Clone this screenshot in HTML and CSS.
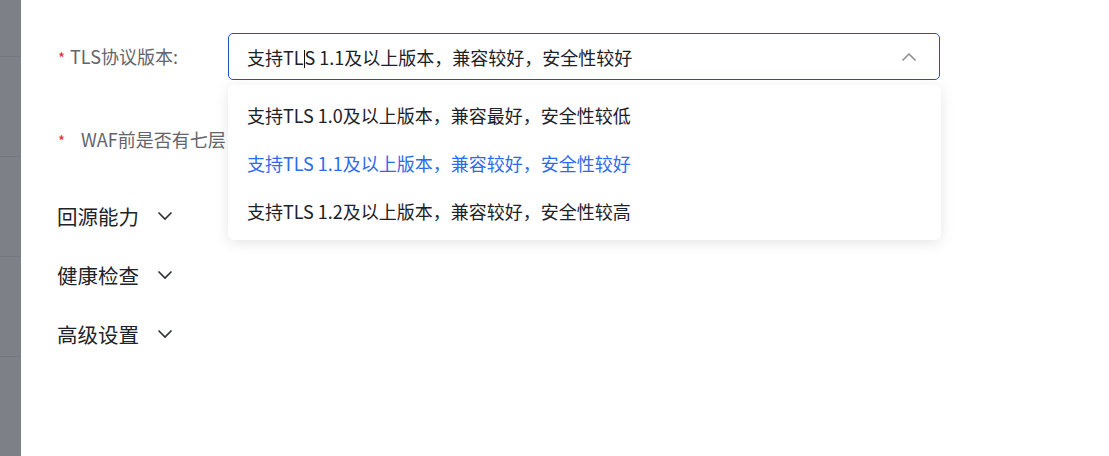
FILE: index.html
```html
<!DOCTYPE html>
<html lang="zh-CN">
<head>
<meta charset="utf-8">
<title>TLS</title>
<link rel="stylesheet" href="styles.css">
</head>
<body>
<div class="page">
  <div class="backdrop">
    <div class="bd-row"></div>
    <div class="bd-row"></div>
    <div class="bd-row"></div>
    <div class="bd-row"></div>
  </div>
  <div class="panel">
    <div class="form-item">
      <div class="label"><span class="req">*</span> TLS协议版本:</div>
      <div class="control">
        <div class="select">
          <span class="value">支持TL<span class="caret"></span>S 1.1及以上版本，兼容较好，安全性较好</span>
          <svg class="arrow" width="16" height="10" viewBox="0 0 16 10"><path d="M1.5 8.5 L8 2 L14.5 8.5" fill="none" stroke="#8c8c8c" stroke-width="1.5"/></svg>
        </div>
        <ul class="menu">
          <li class="opt">支持TLS 1.0及以上版本，兼容最好，安全性较低</li>
          <li class="opt active">支持TLS 1.1及以上版本，兼容较好，安全性较好</li>
          <li class="opt">支持TLS 1.2及以上版本，兼容较好，安全性较高</li>
        </ul>
      </div>
    </div>
    <div class="form-item">
      <div class="label"><span class="req">*</span><span class="gap"></span>WAF前是否有七层</div>
      <div class="control"></div>
    </div>
    <div class="sections">
      <div class="section">回源能力<svg class="chev" width="16" height="10" viewBox="0 0 16 10"><path d="M1.5 1.5 L8 8 L14.5 1.5" fill="none" stroke="#2b2f36" stroke-width="1.6"/></svg></div>
      <div class="section">健康检查<svg class="chev" width="16" height="10" viewBox="0 0 16 10"><path d="M1.5 1.5 L8 8 L14.5 1.5" fill="none" stroke="#2b2f36" stroke-width="1.6"/></svg></div>
      <div class="section">高级设置<svg class="chev" width="16" height="10" viewBox="0 0 16 10"><path d="M1.5 1.5 L8 8 L14.5 1.5" fill="none" stroke="#2b2f36" stroke-width="1.6"/></svg></div>
    </div>
  </div>
</div>
</body>
</html>
```

FILE: styles.css
```css
* { box-sizing: border-box; }
html, body { margin: 0; padding: 0; }
body {
  width: 1109px;
  height: 456px;
  overflow: hidden;
  background: #fff;
  font-family: "Noto Sans CJK SC", "Noto Sans", sans-serif;
}
.page {
  display: flex;
  height: 456px;
}
.backdrop {
  width: 21px;
  flex: none;
  background: #7d8086;
  padding-top: 56px;
  display: flex;
  flex-direction: column;
}
.bd-row {
  height: 100px;
  border-top: 1px solid #74777d;
}
.panel {
  flex: 1;
  padding: 33px 0 0 36px;
}
.form-item {
  display: flex;
  align-items: center;
  height: 47px;
  margin-bottom: 36px;
}
.label {
  width: 171px;
  flex: none;
  font-size: 18px;
  color: #62656b;
  white-space: nowrap;
  line-height: 47px;
}
.req {
  color: #f5222d;
  font-size: 15px;
  margin-left: 1px;
  margin-right: 1px;
}
.gap {
  display: inline-block;
  width: 15px;
}
.control {
  position: relative;
  width: 712px;
  height: 47px;
}
.select {
  height: 47px;
  border: 1px solid #2150cd;
  border-radius: 5px;
  display: flex;
  align-items: center;
  padding: 0 22px 0 18px;
  justify-content: space-between;
  font-size: 18px;
  color: #1d2129;
}
.value { white-space: nowrap; }
.caret {
  display: inline-block;
  width: 0;
  height: 18px;
  border-left: 1px solid #111;
  vertical-align: -3px;
}
.arrow { display: block; }
.menu {
  position: absolute;
  left: 0;
  top: 52px;
  width: 713px;
  margin: 0;
  padding: 6px 0 5px;
  list-style: none;
  background: #fff;
  border-radius: 6px;
  box-shadow: 0 3px 14px rgba(0, 0, 0, 0.1);
  z-index: 5;
}
.opt {
  height: 48px;
  line-height: 48px;
  padding-left: 19px;
  font-size: 18px;
  color: #1d2129;
  white-space: nowrap;
}
.opt.active { color: #2d6bee; }
.sections {
  display: flex;
  flex-direction: column;
  gap: 29px;
  margin-top: 38px;
}
.section {
  height: 30px;
  display: flex;
  align-items: center;
  font-size: 20.5px;
  color: #1f2329;
}
.chev {
  margin-left: 18px;
  display: block;
}
```
